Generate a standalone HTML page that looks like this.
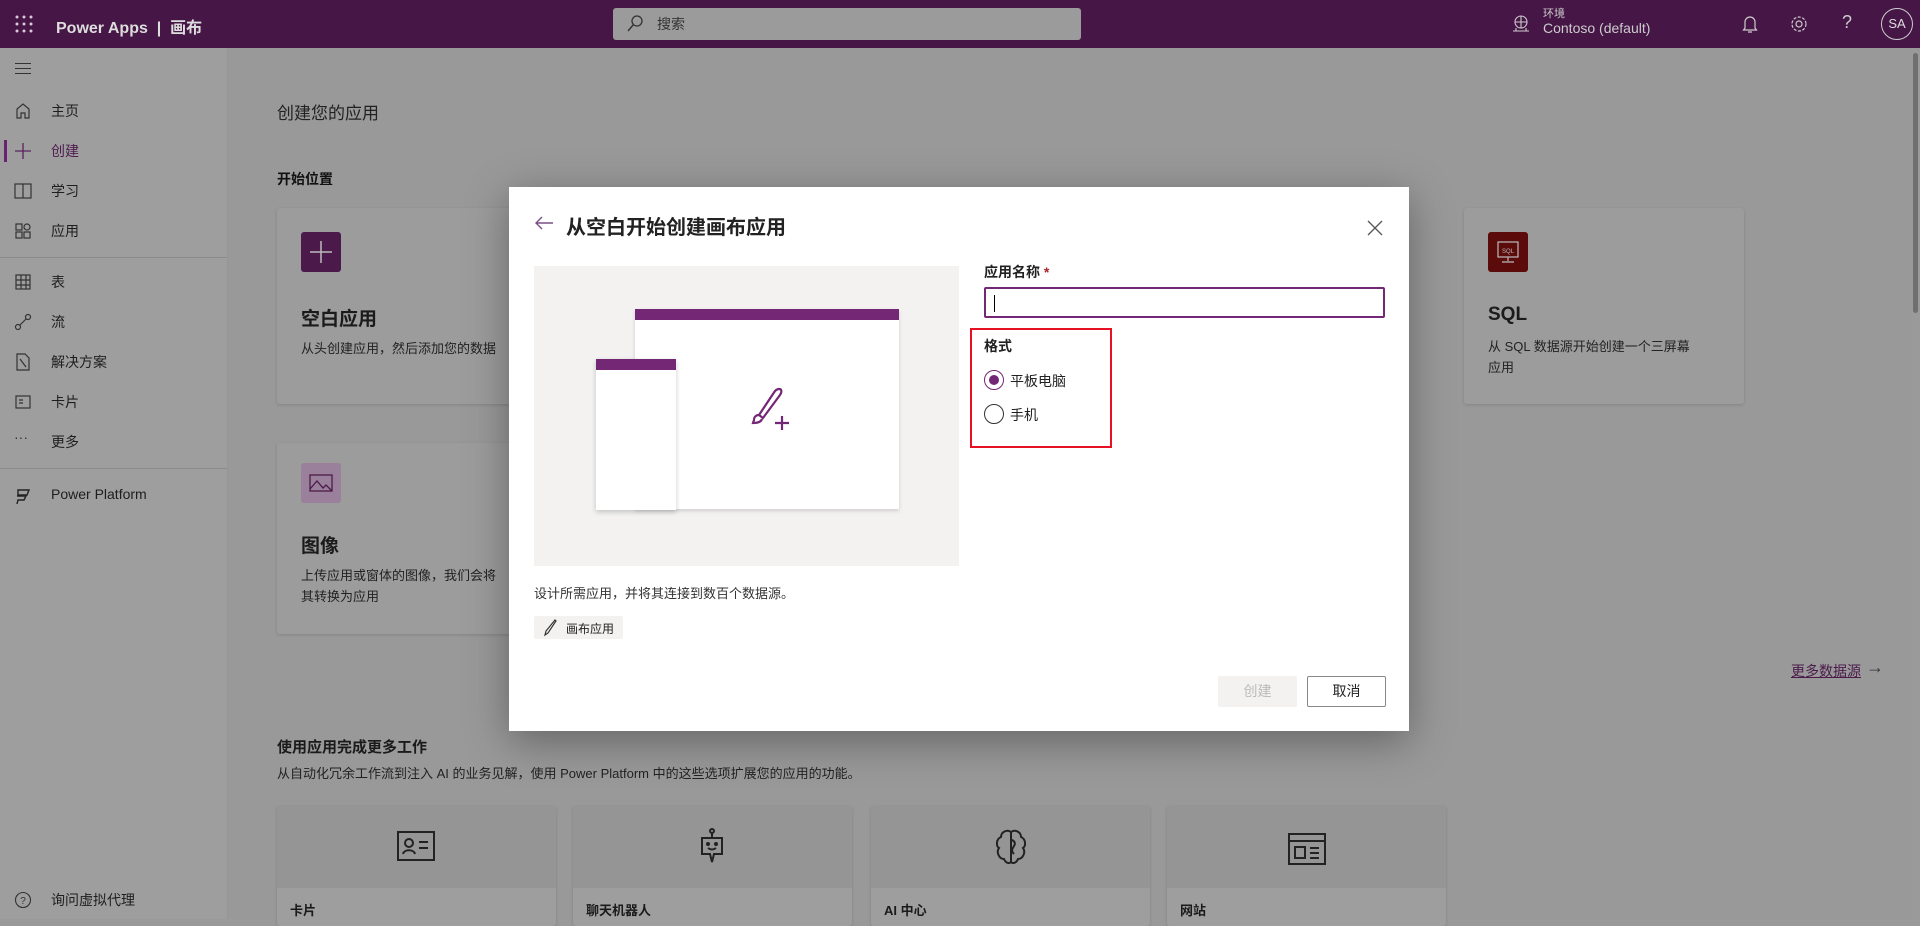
<!DOCTYPE html>
<html><head><meta charset="utf-8"><style>
*{box-sizing:border-box;margin:0;padding:0}
body{width:1920px;height:919px;overflow:hidden;background:#999;font-family:"Liberation Sans","Noto Sans CJK SC",sans-serif;position:relative;color:#1b1b1b}
.abs{position:absolute}
.top{left:0;top:0;width:1920px;height:48px;background:#461646}
.side{left:0;top:48px;width:228px;height:871px;background:#9e9e9e;border-right:1px solid #959595}
.si{position:absolute;left:51px;font-size:14px;color:#1e1e1e}
.ic{position:absolute;left:14px;width:18px;height:18px}
.card{position:absolute;background:#9c9c9c;border-radius:3px;box-shadow:0 1px 3px rgba(0,0,0,.15)}
.modal{left:509px;top:187px;width:900px;height:544px;background:#fff;box-shadow:0 10px 40px rgba(0,0,0,.35)}
</style></head><body>
<div class="abs top">
 <svg class="abs" style="left:15px;top:15px" width="18" height="18"><g fill="#d8c8d8"><circle cx="2" cy="2" r="1.5"/><circle cx="9" cy="2" r="1.5"/><circle cx="16" cy="2" r="1.5"/><circle cx="2" cy="9" r="1.5"/><circle cx="9" cy="9" r="1.5"/><circle cx="16" cy="9" r="1.5"/><circle cx="2" cy="16" r="1.5"/><circle cx="9" cy="16" r="1.5"/><circle cx="16" cy="16" r="1.5"/></g></svg>
 <div class="abs" style="left:56px;top:14px;font-size:16px;color:#ddd;font-weight:bold">Power Apps &nbsp;|&nbsp; 画布</div>
 <div class="abs" style="left:613px;top:8px;width:468px;height:32px;background:#9b9b9b;border-radius:3px"></div>
 <svg class="abs" style="left:627px;top:15px" width="16" height="17"><circle cx="10" cy="6" r="5" fill="none" stroke="#333" stroke-width="1.3"/><path d="M6.5 9.5L1 16" stroke="#333" stroke-width="1.4"/></svg>
 <div class="abs" style="left:657px;top:14px;font-size:14px;color:#333">搜索</div>
 <svg class="abs" style="left:1512px;top:15px" width="18" height="18" fill="none" stroke="#ccc" stroke-width="1.1"><circle cx="9" cy="7" r="6"/><path d="M3 7h12M9 1v12M1 16h16M4 13v3M14 13v3"/></svg>
 <div class="abs" style="left:1543px;top:5px;font-size:11px;color:#ccc">环境</div>
 <div class="abs" style="left:1543px;top:20px;font-size:14px;color:#ccc">Contoso (default)</div>
 <svg class="abs" style="left:1742px;top:14px" width="16" height="20" fill="none" stroke="#ccc" stroke-width="1.2"><path d="M3 14V8a5 5 0 0 1 10 0v6l1.5 2h-13z M6 18h4"/></svg>
 <svg class="abs" style="left:1790px;top:15px" width="18" height="18" fill="none" stroke="#ccc" stroke-width="1.2"><circle cx="9" cy="9" r="3"/><circle cx="9" cy="9" r="7" stroke-dasharray="3 1.5"/></svg>
 <div class="abs" style="left:1842px;top:12px;font-size:18px;color:#ccc">?</div>
 <div class="abs" style="left:1881px;top:8px;width:32px;height:32px;border:1px solid #ccc;border-radius:50%;color:#ddd;font-size:13px;text-align:center;line-height:30px">SA</div>
</div>
<div class="abs side">
 <div class="abs" style="left:15px;top:15px;width:16px;height:11px;border-top:1.3px solid #333;border-bottom:1.3px solid #333"><div style="margin-top:4px;border-top:1.3px solid #333"></div></div>
 <div class="abs" style="left:4px;top:92px;width:3px;height:22px;background:#6b2370"></div>
 <div class="si" style="top:53px">主页</div><div class="si" style="top:93px;color:#4e1c4e">创建</div><div class="si" style="top:133px">学习</div><div class="si" style="top:173px">应用</div>
 <div class="abs" style="left:0;top:209px;width:227px;border-top:1px solid #8a8a8a"></div>
 <div class="si" style="top:224px">表</div><div class="si" style="top:264px">流</div><div class="si" style="top:304px">解决方案</div><div class="si" style="top:344px">卡片</div><div class="si" style="top:384px">更多</div>
 <div class="abs" style="left:0;top:420px;width:227px;border-top:1px solid #8a8a8a"></div>
 <div class="si" style="top:438px">Power Platform</div>
 <div class="si" style="top:842px">询问虚拟代理</div>
 <svg class="ic" style="top:54px" viewBox="0 0 18 18" fill="none" stroke="#333" stroke-width="1.2"><path d="M3 16V7l6-5 6 5v9h-4v-5H7v5z"/></svg>
 <svg class="ic" style="top:94px" viewBox="0 0 18 18" stroke="#5a2160" stroke-width="1.3"><path d="M9 1v16M1 9h16"/></svg>
 <svg class="ic" style="top:134px" viewBox="0 0 18 18" fill="none" stroke="#333" stroke-width="1.2"><rect x="1" y="2" width="16" height="14"/><path d="M9 2v14"/></svg>
 <svg class="ic" style="top:174px" viewBox="0 0 18 18" fill="none" stroke="#333" stroke-width="1.2"><rect x="2" y="2" width="6" height="6"/><rect x="2" y="10" width="6" height="6"/><rect x="10" y="10" width="6" height="6"/><circle cx="13" cy="5" r="3"/></svg>
 <svg class="ic" style="top:225px" viewBox="0 0 18 18" fill="none" stroke="#333" stroke-width="1.2"><rect x="2" y="2" width="14" height="14"/><path d="M2 7h14M2 12h14M7 2v14M12 2v14"/></svg>
 <svg class="ic" style="top:265px" viewBox="0 0 18 18" fill="none" stroke="#333" stroke-width="1.2"><circle cx="4" cy="14" r="2.5"/><circle cx="14" cy="4" r="2.5"/><path d="M6 12l6-6"/></svg>
 <svg class="ic" style="top:305px" viewBox="0 0 18 18" fill="none" stroke="#333" stroke-width="1.2"><path d="M3 1h8l4 4v12H3z M6 6l6 8"/></svg>
 <svg class="ic" style="top:345px" viewBox="0 0 18 18" fill="none" stroke="#333" stroke-width="1.2"><rect x="2" y="3" width="14" height="12"/><path d="M5 7h4M5 10h4"/></svg>
 <div class="abs" style="left:14px;top:381px;font-size:14px;color:#333">···</div>
 <svg class="ic" style="top:439px" viewBox="0 0 18 18" fill="none" stroke="#222" stroke-width="1.4"><path d="M4 3h11l-2 5H4zM3 9h9l-2 4H4l-1 4"/></svg>
 <svg class="ic" style="top:843px" viewBox="0 0 18 18" fill="none" stroke="#333" stroke-width="1.1"><circle cx="9" cy="9" r="7.5"/><text x="9" y="13" font-size="10" text-anchor="middle" fill="#333" stroke="none">?</text></svg>
</div>
<div class="abs" style="left:1911px;top:48px;width:9px;height:871px;background:#9a9a9a"><div style="margin:5px 2px;height:260px;background:#6f6f6f;border-radius:3px"></div></div>
<div class="abs" style="left:277px;top:99px;font-size:17px;color:#222">创建您的应用</div>
<div class="abs" style="left:277px;top:169px;font-size:14px;font-weight:bold;color:#111">开始位置</div>
<div class="card" style="left:277px;top:208px;width:279px;height:196px">
 <div class="abs" style="left:24px;top:24px;width:40px;height:40px;background:#4b1a4b;border-radius:3px"><svg width="40" height="40" stroke="#bbb" stroke-width="1.5"><path d="M20 9v22M9 20h22"/></svg></div>
 <div class="abs" style="left:24px;top:96px;font-size:19px;font-weight:bold">空白应用</div>
 <div class="abs" style="left:24px;top:130px;font-size:13px;color:#222">从头创建应用，然后添加您的数据</div>
</div>
<div class="card" style="left:277px;top:443px;width:279px;height:191px">
 <div class="abs" style="left:24px;top:20px;width:40px;height:40px;background:#9a809a;border-radius:3px"><svg width="40" height="40" fill="none" stroke="#4b1a4b" stroke-width="1.3"><rect x="9" y="12" width="22" height="16"/><path d="M9 26l7-8 6 7 3-3 6 6"/></svg></div>
 <div class="abs" style="left:24px;top:88px;font-size:19px;font-weight:bold">图像</div>
 <div class="abs" style="left:24px;top:122px;font-size:13px;color:#222;line-height:21px">上传应用或窗体的图像，我们会将<br>其转换为应用</div>
</div>
<div class="card" style="left:1464px;top:208px;width:280px;height:196px">
 <div class="abs" style="left:24px;top:24px;width:40px;height:40px;background:#5c0b0b;border-radius:3px"><svg width="40" height="40" fill="none" stroke="#bbb" stroke-width="1.2"><rect x="10" y="10" width="20" height="15"/><path d="M20 25v4M14 30h12"/><text x="20" y="21" font-size="6" text-anchor="middle" fill="#bbb" stroke="none">SQL</text></svg></div>
 <div class="abs" style="left:24px;top:96px;font-size:19px;font-weight:bold">SQL</div>
 <div class="abs" style="left:24px;top:128px;font-size:13px;color:#222;line-height:21px">从 SQL 数据源开始创建一个三屏幕<br>应用</div>
</div>
<div class="abs" style="left:1791px;top:661px;font-size:14px;color:#4b1a4b;text-decoration:underline">更多数据源</div>
<div class="abs" style="left:1866px;top:657px;font-size:18px;color:#333">→</div>
<div class="abs" style="left:277px;top:736px;font-size:15px;font-weight:bold">使用应用完成更多工作</div>
<div class="abs" style="left:277px;top:763px;font-size:13px;color:#222">从自动化冗余工作流到注入 AI 的业务见解，使用 Power Platform 中的这些选项扩展您的应用的功能。</div>
<div class="card" style="left:277px;top:806px;width:279px;height:120px;background:#9e9e9e"><div style="height:82px;background:#959595"></div><div class="abs" style="left:13px;top:94px;font-size:13px;font-weight:bold">卡片</div>
<svg class="abs" style="left:119px;top:24px" width="40" height="32" fill="none" stroke="#222" stroke-width="2"><rect x="2" y="2" width="36" height="28"/><circle cx="13" cy="13" r="4"/><path d="M7 24c1-5 11-5 12 0M23 12h9M23 18h9"/></svg></div>
<div class="card" style="left:573px;top:806px;width:279px;height:120px;background:#9e9e9e"><div style="height:82px;background:#959595"></div><div class="abs" style="left:13px;top:94px;font-size:13px;font-weight:bold">聊天机器人</div>
<svg class="abs" style="left:124px;top:22px" width="30" height="40" fill="none" stroke="#222" stroke-width="2"><circle cx="15" cy="3" r="2"/><path d="M15 5v5M5 10h20v16H17l-2 8-2-8H5z M11 20q4 3 8 0"/><circle cx="11" cy="16" r="1" fill="#222"/><circle cx="19" cy="16" r="1" fill="#222"/></svg></div>
<div class="card" style="left:871px;top:806px;width:279px;height:120px;background:#9e9e9e"><div style="height:82px;background:#959595"></div><div class="abs" style="left:13px;top:94px;font-size:13px;font-weight:bold">AI 中心</div>
<svg class="abs" style="left:122px;top:22px" width="36" height="40" fill="none" stroke="#222" stroke-width="2"><path d="M18 4c-4-3-10 0-10 5-5 2-5 9-2 11-3 4 0 11 5 11 2 5 7 5 7 2zM18 4c4-3 10 0 10 5 5 2 5 9 2 11 3 4 0 11-5 11-2 5-7 5-7 2z M18 12c3 0 5 3 3 6s-3 5 0 8"/></svg></div>
<div class="card" style="left:1167px;top:806px;width:279px;height:120px;background:#9e9e9e"><div style="height:82px;background:#959595"></div><div class="abs" style="left:13px;top:94px;font-size:13px;font-weight:bold">网站</div>
<svg class="abs" style="left:120px;top:26px" width="40" height="34" fill="none" stroke="#222" stroke-width="2"><rect x="2" y="2" width="36" height="30"/><path d="M2 9h36M8 15h10v11H8zM23 16h9M23 21h9M23 26h9"/></svg></div>

<div class="abs modal">
 <svg class="abs" style="left:25px;top:28px" width="20" height="16" fill="none" stroke="#7a4f85" stroke-width="1.4"><path d="M19 8H2M8 2L2 8l6 6"/></svg>
 <div class="abs" style="left:57px;top:24px;font-size:20px;font-weight:bold;color:#222">从空白开始创建画布应用</div>
 <svg class="abs" style="left:858px;top:33px" width="16" height="16" stroke="#555" stroke-width="1.3"><path d="M1 1l14 14M15 1L1 15"/></svg>
 <div class="abs" style="left:25px;top:79px;width:425px;height:300px;background:#f3f2f1">
  <div class="abs" style="left:101px;top:43px;width:264px;height:200px;background:#fff;box-shadow:0 2px 4px rgba(0,0,0,.15);border-top:11px solid #742774"></div>
  <div class="abs" style="left:62px;top:93px;width:80px;height:151px;background:#fff;box-shadow:0 2px 5px rgba(0,0,0,.2);border-top:11px solid #742774"></div>
  <svg class="abs" style="left:212px;top:120px" width="46" height="46" fill="none" stroke="#742774" stroke-width="2.2"><path d="M33 3c3 0 3 3 1 6L17 32l-4-3L29 5c1-1 2-2 4-2zM13 29c-3 0-5 2-5 5l-1 3c4 0 8-1 9-4"/><path d="M36 30v14M29 37h14"/></svg>
 </div>
 <div class="abs" style="left:25px;top:396px;font-size:13px;color:#333">设计所需应用，并将其连接到数百个数据源。</div>
 <div class="abs" style="left:25px;top:429px;width:89px;height:23px;background:#f3f2f1;border-radius:2px;font-size:12px;color:#222;padding:4px 0 0 32px">画布应用</div>
 <svg class="abs" style="left:32px;top:432px" width="16" height="18" fill="none" stroke="#333" stroke-width="1.2"><path d="M14 1L5 12l-1 4 3-2 8-12z"/></svg>
 <div class="abs" style="left:475px;top:75px;font-size:14px;font-weight:bold;color:#222">应用名称 <span style="color:#a4262c">*</span></div>
 <div class="abs" style="left:475px;top:100px;width:401px;height:31px;border:2px solid #742774;border-radius:2px"><div style="margin:6px 0 0 8px;width:1px;height:17px;background:#000"></div></div>
 <div class="abs" style="left:461px;top:141px;width:142px;height:120px;border:2px solid #e81123"></div>
 <div class="abs" style="left:475px;top:149px;font-size:14px;font-weight:bold;color:#222">格式</div>
 <div class="abs" style="left:475px;top:183px;width:20px;height:20px;border:1px solid #742774;border-radius:50%"><div style="margin:4px;width:10px;height:10px;border-radius:50%;background:#742774"></div></div>
 <div class="abs" style="left:501px;top:184px;font-size:14px;color:#222">平板电脑</div>
 <div class="abs" style="left:475px;top:217px;width:20px;height:20px;border:1px solid #333;border-radius:50%"></div>
 <div class="abs" style="left:501px;top:218px;font-size:14px;color:#222">手机</div>
 <div class="abs" style="left:709px;top:489px;width:79px;height:31px;background:#f3f2f1;border-radius:2px;color:#bbb;font-size:14px;text-align:center;line-height:31px">创建</div>
 <div class="abs" style="left:798px;top:489px;width:79px;height:31px;border:1px solid #8a8886;border-radius:2px;color:#222;font-size:14px;text-align:center;line-height:29px">取消</div>
</div>
</body></html>
